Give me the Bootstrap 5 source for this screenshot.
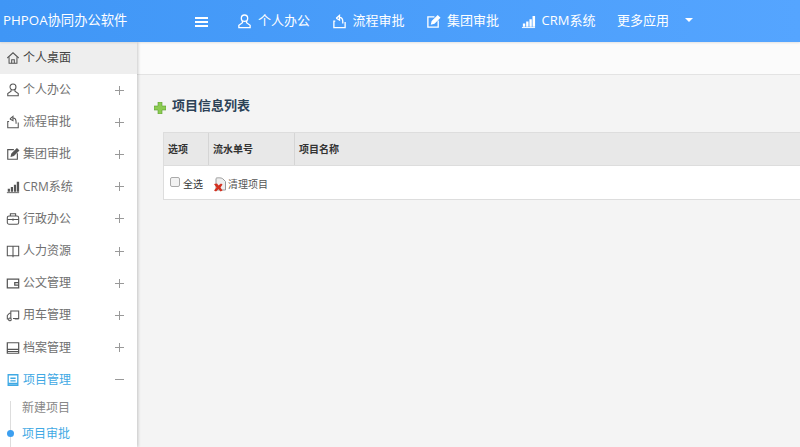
<!DOCTYPE html>
<html lang="zh">
<head>
<meta charset="utf-8">
<title>PHPOA协同办公软件</title>
<link href="https://cdn.jsdelivr.net/npm/bootstrap@5.3.0/dist/css/bootstrap.min.css" rel="stylesheet">
<style>
html,body{height:447px;overflow:hidden}
body{font-family:"Open Sans","Noto Sans CJK SC",sans-serif;background:#f4f4f4;color:#555;font-size:12px}
.topbar{height:42px;background:linear-gradient(90deg,#3f96f6,#55a5ff);color:#fff;padding:0;flex-wrap:nowrap;position:relative;z-index:3;box-shadow:0 1px 2px rgba(0,0,0,.1)}
.brandname{width:137px;padding-left:3px;font-size:13.3px;color:#fff;white-space:nowrap}
.burger{width:13px;margin-left:58px;margin-right:29px;margin-top:2px}
.burger span{display:block;height:2px;background:#fff;margin:2px 0}
.topitem{display:flex;align-items:center;color:#fff;font-size:13px;gap:6px;margin-right:21.5px;white-space:nowrap;text-decoration:none}
.topitem svg{width:15px;height:15px}
.topmore{margin-right:16px}
.caretmark{width:0;height:0;border-left:4px solid transparent;border-right:4px solid transparent;border-top:4px solid #fff;margin-top:-3px}
.mainarea{height:405px}
.sidepanel{width:137px;flex:none;background:#fff;box-shadow:1px 0 3px rgba(0,0,0,.2);position:relative;z-index:2;overflow:hidden}
.sideitem{height:32.2px;display:flex;align-items:center;padding:0 13px 0 6px;color:#707070;font-size:12px;background:transparent;border:0;border-radius:0;gap:3px}
.sideitem svg{width:14px;height:14px;flex:none}
.sideitem.homeitem{background:#eee;color:#444;height:32px;margin-bottom:0}
.sideitem.openitem{color:#3fa9e4}
.plusmark{margin-left:auto;width:9px;height:9px;position:relative;flex:none}
.plusmark::before{content:"";position:absolute;left:0;right:0;top:4px;height:1px;background:#999}
.plusmark.growmark::after{content:"";position:absolute;top:0;bottom:0;left:4px;width:1px;background:#999}
.subgroup{border-left:1px solid #ddd;margin:5px 0 0 10px;height:60px;position:relative}
.subitem{padding-left:11px;height:26px;display:flex;align-items:center;color:#888}
.subitem.activesub{color:#3fa9e4}
.subitem.firstsub{margin-top:-6px}
.dotmark{position:absolute;left:-4px;top:29px;width:7px;height:7px;border-radius:50%;background:#3c9ff0}
.contentarea{min-width:0;overflow:hidden}
.subheader{height:33px;background:#fbfbfb;border-bottom:1px solid #e3e3e3}
.pagetitle{font-size:13px;font-weight:700;color:#2c4257;margin:22px 0 0 17px;height:18px;gap:6px}
.pagetitle svg{width:12px;height:12px;margin-top:3px}
.listbox{margin:17px 0 0 26px;width:640px;border:1px solid #ddd;border-right:0;background:#fff;font-size:10px}
.headrow{height:33px;background:#e8e8e8;border-bottom:1px solid #ddd;color:#333;font-weight:700}
.headcell{padding-left:4px;display:flex;align-items:center;height:100%;border-right:1px solid #d5d5d5}
.cellopt{width:45px}
.cellno{width:86px}
.bodyrow{height:33px;color:#333;padding:3px 0 0 6px;gap:3px}
.tickbox{width:10px;height:10px;border:1px solid #aaa;border-radius:2px;background:#f2f2f2;margin-top:-4px}
.cleanlink{margin-left:7px;color:#555;display:flex;align-items:center;gap:1px}
.cleanlink svg{width:14px;height:15px}
</style>
</head>
<body>
<nav class="navbar topbar d-flex justify-content-start align-items-center">
  <div class="brandname">PHPOA协同办公软件</div>
  <div class="burger"><span></span><span></span><span></span></div>
  <a class="topitem"><svg viewBox="0 0 16 16" fill="none" stroke="#fff" stroke-width="1.4"><circle cx="8" cy="4.500" r="3.400"/><path d="M5.800 7.500v1.800L2 12v2.500h12V12l-3.800-2.700V7.500"/></svg>个人办公</a>
  <a class="topitem"><svg viewBox="0 0 16 16" fill="none" stroke="#fff" stroke-width="1.400"><path d="M3.500 7.500H2v7h12v-6"/><path d="M4.500 4.500L8 1.500v2c2.500 0 3.500 2 3.500 4.500v2"/><path d="M8 3.500v3L4.500 4.500"/></svg>流程审批</a>
  <a class="topitem"><svg viewBox="0 0 16 16" fill="none" stroke="#fff" stroke-width="1.400"><path d="M9 3H2v11h11V7"/><path d="M6 10.500l.7-2.700L12.500 2 14.500 4 8.700 9.800z" fill="#fff"/></svg>集团审批</a>
  <a class="topitem"><svg viewBox="0 0 16 16" fill="#fff"><path d="M1 14h14v1H1z"/><path d="M2 10h2.500v3.500H2zM5.500 8H8v5.500H5.500zM9 5.500h2.500v8H9zM12.300 2H15v11.500h-2.700z"/></svg>CRM系统</a>
  <a class="topitem topmore">更多应用</a>
  <span class="caretmark"></span>
</nav>
<div class="d-flex mainarea">
  <aside class="sidepanel">
    <div class="list-group list-group-flush">
      <div class="sideitem homeitem"><svg viewBox="0 0 16 16" fill="none" stroke="#555" stroke-width="1.200"><path d="M1.500 8L8 2l6.500 6"/><path d="M3.500 7v7h9V7"/><path d="M6.500 14v-4h3v4"/></svg>个人桌面</div>
      <div class="sideitem"><svg viewBox="0 0 16 16" fill="none" stroke="#555" stroke-width="1.200"><circle cx="8" cy="4.500" r="3.400"/><path d="M5.800 7.500v1.800L2 12v2.500h12V12l-3.800-2.700V7.500"/></svg>个人办公<span class="plusmark growmark"></span></div>
      <div class="sideitem"><svg viewBox="0 0 16 16" fill="none" stroke="#555" stroke-width="1.200"><path d="M3.500 7.500H2v7h12v-6"/><path d="M4.500 4.500L8 1.500v2c2.500 0 3.500 2 3.500 4.500v2"/><path d="M8 3.500v3L4.500 4.500"/></svg>流程审批<span class="plusmark growmark"></span></div>
      <div class="sideitem"><svg viewBox="0 0 16 16" fill="none" stroke="#555" stroke-width="1.300"><path d="M9 3H2v11h11V7"/><path d="M6 10.500l.7-2.700L12.500 2 14.500 4 8.700 9.800z" fill="#555"/></svg>集团审批<span class="plusmark growmark"></span></div>
      <div class="sideitem"><svg viewBox="0 0 16 16" fill="#555"><path d="M1 14h14v1H1z"/><path d="M2 10h2.500v3.500H2zM5.500 8H8v5.500H5.500zM9 5.500h2.500v8H9zM12.300 2H15v11.500h-2.700z"/></svg>CRM系统<span class="plusmark growmark"></span></div>
      <div class="sideitem"><svg viewBox="0 0 16 16" fill="none" stroke="#555" stroke-width="1.200"><rect x="1.500" y="4.500" width="13" height="9.500" rx="2"/><path d="M5 4.500V2h6v2.500M1.500 8.500h13M8 7.500v2.500"/></svg>行政办公<span class="plusmark growmark"></span></div>
      <div class="sideitem"><svg viewBox="0 0 16 16" fill="none" stroke="#555" stroke-width="1.200"><path d="M1.500 2.500h13v11h-13zM8 2.500v12.500M6 13.500h4"/></svg>人力资源<span class="plusmark growmark"></span></div>
      <div class="sideitem"><svg viewBox="0 0 16 16" fill="none" stroke="#555" stroke-width="1.400"><path d="M1.500 3.500h13v10h-13zM14.500 7.500H10v3h4.500"/></svg>公文管理<span class="plusmark growmark"></span></div>
      <div class="sideitem"><svg viewBox="0 0 16 16" fill="none" stroke="#555" stroke-width="1.200"><path d="M5.500 12V3.500h9V12H8"/><path d="M3 12.500H1.500V8.500L4 6h1.500"/><circle cx="4.500" cy="13" r="1.500"/><path d="M10 12.500h4.500"/></svg>用车管理<span class="plusmark growmark"></span></div>
      <div class="sideitem"><svg viewBox="0 0 16 16" fill="none" stroke="#555" stroke-width="1.400"><path d="M1.500 2h13v12h-13zM1.500 9.500h13M1.500 12h13"/></svg>档案管理<span class="plusmark growmark"></span></div>
      <div class="sideitem openitem"><svg viewBox="0 0 16 16" fill="none" stroke="#3fa9e4" stroke-width="1.500"><path d="M2.500 2h11v12h-11zM5 6h6M5 9h6M2.500 12h11"/></svg>项目管理<span class="plusmark"></span></div>
      <div class="subgroup">
        <div class="subitem firstsub">新建项目</div>
        <div class="subitem activesub">项目审批</div>
        <span class="dotmark"></span>
      </div>
    </div>
  </aside>
  <main class="flex-grow-1 contentarea">
    <div class="subheader"></div>
    <div class="pagetitle d-flex align-items-center">
      <svg viewBox="0 0 12 12"><path d="M4 0h4v4h4v4H8v4H4V8H0V4h4z" fill="#8ccb52" stroke="#5c9e30" stroke-width=".6"/></svg>项目信息列表
    </div>
    <div class="listbox">
      <div class="headrow d-flex align-items-center">
        <div class="headcell cellopt">选项</div>
        <div class="headcell cellno">流水单号</div>
        <div class="headcell border-0">项目名称</div>
      </div>
      <div class="bodyrow d-flex align-items-center">
        <span class="tickbox"></span><span>全选</span>
        <span class="cleanlink"><svg viewBox="0 0 14 15"><path d="M3 1.500C3 .5 9 .5 10 2l2.500 2.500V13H3z" fill="#eee" stroke="#999"/><path d="M1 7l3-.5 1.500 2L8 6.500l1.500 1L7.500 10.500 9.500 13.500 7.500 14.500 5.500 12 3 14.500 1 13.500l2.500-3z" fill="#d3301f"/></svg>清理项目</span>
      </div>
    </div>
  </main>
</div>
</body>
</html>
